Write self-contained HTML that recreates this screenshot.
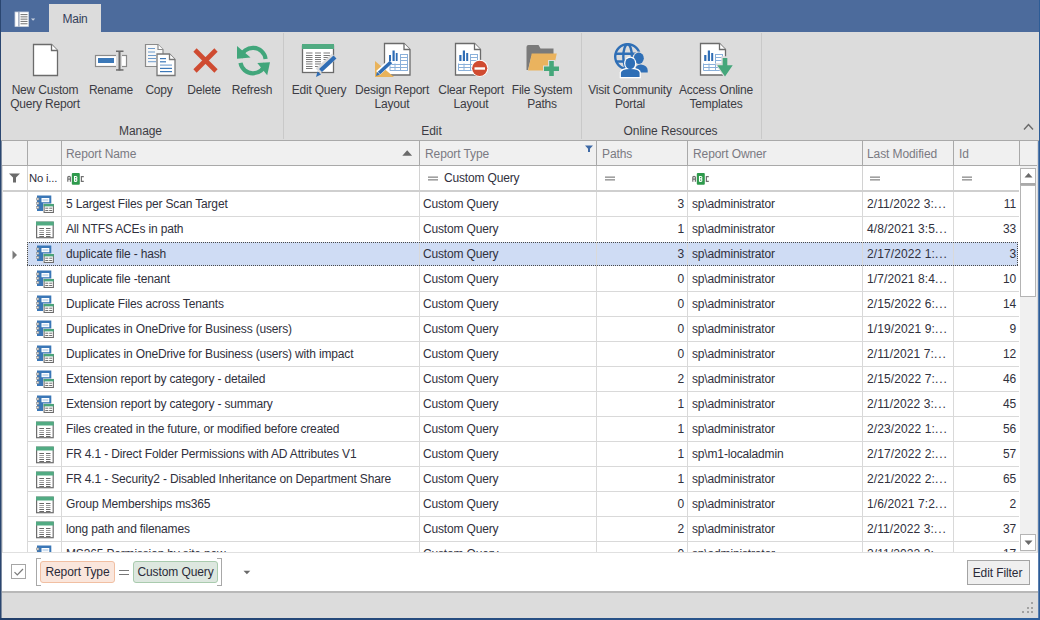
<!DOCTYPE html>
<html><head><meta charset="utf-8"><style>
*{box-sizing:border-box;margin:0;padding:0}
html,body{width:1040px;height:620px;overflow:hidden;background:#dcdcdc;font-family:"Liberation Sans",sans-serif;position:relative}
.abs{position:absolute}
svg{display:block}
.dh{position:absolute;height:1px;background:repeating-linear-gradient(90deg,#4a4a4a 0 1px,transparent 1px 2px)}
.dv{position:absolute;width:1px;background:repeating-linear-gradient(180deg,#4a4a4a 0 1px,transparent 1px 2px)}
#tabbar{position:absolute;left:0;top:0;width:1040px;height:32px;background:#4c6b9c}
#tab{position:absolute;left:49px;top:4px;width:52px;height:28px;background:#dcdcdc;font-size:12px;color:#34405a;text-align:center;line-height:30px;letter-spacing:-0.3px}
.rsep{position:absolute;top:33px;width:1px;height:106px;background:#c9c9c9}
.rbtn{position:absolute;top:83px;font-size:12px;letter-spacing:-0.2px;color:#3c3c44;text-align:center;line-height:14px;white-space:nowrap}
.glab{position:absolute;top:124px;font-size:12px;letter-spacing:-0.1px;color:#3c3c44;text-align:center;white-space:nowrap}
.ht{position:absolute;font-size:12px;letter-spacing:-0.1px;color:#7a7a82;line-height:25px;white-space:nowrap}
.t{position:absolute;font-size:12px;letter-spacing:-0.16px;color:#30303c;line-height:24px;white-space:nowrap}
.t.r{text-align:right}
.ic{position:absolute;width:18px;height:18px}
.pill{position:absolute;top:561px;height:22px;border-radius:3px;font-size:12px;letter-spacing:-0.1px;color:#2a2a38;line-height:20px;text-align:center;white-space:nowrap}
</style></head><body>
<div id="tabbar"></div>
<div id="tab">Main</div>
<svg class="abs" style="left:14px;top:11px" width="24" height="17" viewBox="0 0 24 17"><rect x="1" y="1" width="13.5" height="14.5" fill="#fff" stroke="#c8d0dc" stroke-width="0.8"/><rect x="4.3" y="1" width="1.2" height="14.5" fill="#8a98b0"/><g fill="#7d7d7d"><rect x="6.5" y="3" width="7" height="1.1"/><rect x="6.5" y="5.3" width="7" height="1.1"/><rect x="6.5" y="7.6" width="7" height="1.1"/><rect x="6.5" y="9.9" width="7" height="1.1"/><rect x="6.5" y="12.2" width="7" height="1.1"/></g><path d="M17 7.5h4.2l-2.1 2.2z" fill="#c9d2df"/></svg>
<div class="abs" style="left:1px;top:32px;width:1038px;height:108px;background:#dcdcdc"></div>
<div class="rsep" style="left:283px"></div>
<div class="rsep" style="left:581px"></div>
<div class="rsep" style="left:761px"></div>
<svg class="abs" style="left:0;top:0" width="1040" height="140" viewBox="0 0 1040 140">
<!-- New doc -->
<path d="M33.5 44.5H51.5L57.5 50.5V75.5H33.5Z" fill="#fff" stroke="#6b6b6b" stroke-width="1.3"/>
<path d="M51.5 44.5V50.5H57.5" fill="#fff" stroke="#6b6b6b" stroke-width="1.3"/>
<!-- Rename -->
<rect x="95.5" y="55.5" width="31" height="11" fill="#fff" stroke="#8a8a8a" stroke-width="1.2"/>
<rect x="98" y="58" width="16" height="5" fill="#3b78b8"/>
<rect x="116" y="52" width="6" height="18" fill="#dcdcdc"/>
<rect x="118.5" y="51" width="2" height="19.5" fill="#6b6b6b"/>
<rect x="116" y="50.5" width="7.5" height="1.5" fill="#6b6b6b"/>
<rect x="116" y="69.2" width="7.5" height="1.5" fill="#6b6b6b"/>
<!-- Copy -->
<path d="M145.5 44.5H158L163 49.5V66.5H145.5Z" fill="#f7f7f7" stroke="#8a8a8a" stroke-width="1.2"/>
<path d="M158 44.5V49.5H163" fill="#fff" stroke="#8a8a8a" stroke-width="1.2"/>
<g fill="#6f9ccc"><rect x="148" y="48" width="7" height="1"/><rect x="148" y="51.5" width="7" height="1"/><rect x="148" y="55" width="8" height="1"/><rect x="148" y="58" width="8" height="1"/><rect x="148" y="61.2" width="8" height="1"/></g>
<path d="M157 54H169.5L175 59.5V75.5H157Z" fill="#fff" stroke="#777" stroke-width="1.3"/>
<path d="M169.5 54V59.5H175" fill="#fff" stroke="#777" stroke-width="1.3"/>
<g fill="#3d78b8"><rect x="160" y="58" width="6" height="1.2"/><rect x="160" y="61.2" width="6" height="1.2"/><rect x="160" y="64.5" width="12" height="1.2" fill="#7ea6d2"/><rect x="160" y="67.8" width="12" height="1.2"/><rect x="160" y="71" width="12" height="1.2"/></g>
<!-- Delete -->
<path d="M195 50L216 71M216 50L195 71" stroke="#cf4b31" stroke-width="4.6"/>
<!-- Refresh -->
<g fill="none" stroke="#41a67b" stroke-width="4.2">
<path d="M240.6 57.8A12.7 12.7 0 0 1 265.6 58.9"/>
<path d="M265.4 63.3A12.7 12.7 0 0 1 240.5 62.9"/>
</g>
<path d="M237 46L237 58.8L250.5 57.5Z" fill="#41a67b"/>
<path d="M257.3 63L270 62.3L267.2 75.2Z" fill="#41a67b"/>
<!-- Edit Query -->
<rect x="302.5" y="46" width="31" height="26.5" fill="#fff" stroke="#6b6b6b" stroke-width="1.3"/>
<rect x="302" y="44" width="32" height="5" fill="#51ab82"/>
<g fill="#7a7a7a">
<rect x="306" y="52.5" width="6.5" height="1"/><rect x="315" y="52.5" width="6" height="1"/><rect x="323.5" y="52.5" width="6.5" height="1"/>
<rect x="306" y="55" width="6.5" height="1"/><rect x="315" y="55" width="6" height="1"/><rect x="323.5" y="55" width="6.5" height="1"/>
<rect x="306" y="57" width="6.5" height="1"/><rect x="315" y="57" width="6" height="1"/><rect x="323.5" y="57" width="6.5" height="1"/>
<rect x="306" y="59" width="6.5" height="1"/><rect x="315" y="59" width="6" height="1"/><rect x="323.5" y="59" width="6.5" height="1"/>
<rect x="306" y="61.2" width="6.5" height="1"/><rect x="315" y="61.2" width="6" height="1"/>
<rect x="306" y="63.5" width="6.5" height="1"/><rect x="315" y="63.5" width="6" height="1"/>
<rect x="306" y="66" width="6.5" height="1"/><rect x="315" y="66" width="5" height="1"/>
<rect x="306" y="68" width="6.5" height="1"/>
</g>
<path d="M318 71L334.5 56" stroke="#dcdcdc" stroke-width="7"/>
<path d="M320.5 70.5L335 57" stroke="#2f6db5" stroke-width="4.2"/>
<path d="M316 77L317.5 71.5L321 74.5Z" fill="#2f6db5"/>
<!-- Design Report Layout -->
<path d="M384.5 43.5H404L410 49.5V75H384.5Z" fill="#fff" stroke="#6b6b6b" stroke-width="1.3"/>
<path d="M404 43.5V49.5H410" fill="#fff" stroke="#6b6b6b" stroke-width="1.3"/>
<g fill="#2f6db5"><rect x="389" y="55" width="2" height="6"/><rect x="392.5" y="50.5" width="2.2" height="10.5"/><rect x="395.8" y="53" width="1.8" height="8"/></g>
<g fill="none" stroke="#8ab0da" stroke-width="1"><rect x="400.5" y="54.5" width="7" height="16"/><path d="M400.5 57.5H407.5M400.5 60.5H407.5M390 64.5H407.5M390 67.5H407.5"/><path d="M390 63.5V70.5H400.5M395 63.5V70.5"/></g>
<path d="M375 61L375 77H394Z" fill="#e9b35b"/>
<path d="M378 73L390 62" stroke="#fff" stroke-width="5.5"/>
<path d="M379 73L391 62" stroke="#2f6db5" stroke-width="3.5"/>
<path d="M376 76L377 72L380 74.5Z" fill="#2f6db5"/>
<!-- Clear Report Layout -->
<path d="M455.5 43.5H474.5L480.5 49.5V75H455.5Z" fill="#fff" stroke="#6b6b6b" stroke-width="1.3"/>
<path d="M474.5 43.5V49.5H480.5" fill="#fff" stroke="#6b6b6b" stroke-width="1.3"/>
<g fill="#2f6db5"><rect x="459.3" y="55" width="2.2" height="6"/><rect x="462.8" y="50.5" width="2.2" height="10.5"/><rect x="466.2" y="53" width="2" height="8"/></g>
<g fill="none" stroke="#8ab0da" stroke-width="1"><rect x="470.5" y="54.5" width="7" height="16"/><path d="M470.5 57.5H477.5M470.5 60.5H477.5M458.5 64.5H477.5M458.5 67.5H477.5"/><path d="M458.5 63.5V70.5H470.5M464 63.5V70.5"/></g>
<circle cx="479.7" cy="68.3" r="8.5" fill="#fff"/>
<circle cx="479.7" cy="68.3" r="7.6" fill="#d04b31"/>
<rect x="474.5" y="67.3" width="10.5" height="2.4" fill="#fff"/>
<!-- File system paths -->
<path d="M526.5 47Q526.5 45 528.5 45H538.5L540.5 48.5H553.5V56H531.5L528 70H526.5Z" fill="#7a7a7a"/>
<path d="M531.7 53.5H556.8L553 70.6H528.1Z" fill="#eab35e"/>
<path d="M543 65.5H560V72H543Z" fill="#dcdcdc"/>
<path d="M548 60H555V77H548Z" fill="#dcdcdc"/>
<rect x="544" y="66.5" width="15" height="4.5" fill="#45a77b"/>
<rect x="549.2" y="61" width="4.6" height="15" fill="#45a77b"/>
<!-- Globe -->
<g fill="none" stroke="#2f6fb6" stroke-width="2.4">
<circle cx="627.6" cy="56.6" r="12.4"/>
<ellipse cx="627.6" cy="56.6" rx="4.3" ry="12.4"/>
<path d="M616 53.8H640M616 61.5H640"/>
</g>
<ellipse cx="638.8" cy="58.2" rx="6.2" ry="6.8" fill="#dcdcdc"/>
<path d="M634 64Q641 62 649 66V74H634Z" fill="#dcdcdc"/>
<ellipse cx="638.8" cy="58.2" rx="5" ry="5.7" fill="#2f6fb6"/>
<path d="M635.5 72.5V68Q636.5 64.5 641 64.5Q647.7 65.5 647.7 70.5V72.5Z" fill="#2f6fb6"/>
<ellipse cx="630.2" cy="63.4" rx="6.1" ry="6.9" fill="#fff"/>
<path d="M619.7 78.2V72.5Q620 68 630 67.8Q640.8 68 640.8 72.5V78.2Z" fill="#fff"/>
<ellipse cx="630.2" cy="63.4" rx="4.9" ry="5.7" fill="#2f6fb6"/>
<path d="M620.9 77.1V72.8Q621.3 69.2 630.2 69Q639.3 69.2 639.6 72.8V77.1Z" fill="#2f6fb6"/>
<!-- Access Online Templates -->
<path d="M700.5 43.5H719.5L725.5 49.5V75H700.5Z" fill="#fff" stroke="#6b6b6b" stroke-width="1.3"/>
<path d="M719.5 43.5V49.5H725.5" fill="#fff" stroke="#6b6b6b" stroke-width="1.3"/>
<g fill="#2f6db5"><rect x="704.2" y="55" width="2.2" height="6"/><rect x="707.8" y="50.5" width="2.2" height="10.5"/><rect x="711.2" y="53" width="2" height="8"/></g>
<g fill="none" stroke="#8ab0da" stroke-width="1"><rect x="715.5" y="54.5" width="7" height="16"/><path d="M715.5 57.5H722.5M715.5 60.5H722.5M703.5 64.5H722.5M703.5 67.5H722.5"/><path d="M703.5 63.5V70.5H715.5M709 63.5V70.5"/></g>
<path d="M722 57H728.5V64L733.8 64L725.2 77.5L716.3 64H722Z" fill="#dcdcdc" stroke="#dcdcdc" stroke-width="1.5"/>
<path d="M722.7 58H727.3V65.2L732.7 65.2L725 76.6L717.3 65.2H722.7Z" fill="#45a77b"/>
</svg>

<div class="rbtn" style="left:5px;width:80px">New Custom<br>Query Report</div>
<div class="rbtn" style="left:81px;width:60px">Rename</div>
<div class="rbtn" style="left:135px;width:48px">Copy</div>
<div class="rbtn" style="left:180px;width:48px">Delete</div>
<div class="rbtn" style="left:222px;width:60px">Refresh</div>
<div class="rbtn" style="left:289px;width:60px">Edit Query</div>
<div class="rbtn" style="left:352px;width:80px">Design Report<br>Layout</div>
<div class="rbtn" style="left:431px;width:80px">Clear Report<br>Layout</div>
<div class="rbtn" style="left:507px;width:70px">File System<br>Paths</div>
<div class="rbtn" style="left:585px;width:90px">Visit Community<br>Portal</div>
<div class="rbtn" style="left:676px;width:80px">Access Online<br>Templates</div>
<div class="glab" style="left:100px;width:81px">Manage</div>
<div class="glab" style="left:391px;width:81px">Edit</div>
<div class="glab" style="left:610px;width:121px">Online Resources</div>
<svg class="abs" style="left:1023px;top:122px" width="12" height="9" viewBox="0 0 12 9"><path d="M1 7.5L5.5 2.5L10 7.5" fill="none" stroke="#6a6a6a" stroke-width="1.4"/></svg>
<div class="abs" style="left:1px;top:140px;width:1038px;height:1px;background:#a9a9a9"></div>
<div class="abs" style="left:2px;top:141px;width:1036px;height:412px;background:#fff;"></div>
<div class="abs" style="left:2px;top:141px;width:1036px;height:24px;background:#f0f0f0;"></div>
<div class="abs" style="left:2px;top:165px;width:1036px;height:1px;background:#a9a9a9;"></div>
<div class="abs" style="left:27px;top:141px;width:1px;height:24px;background:#a9a9a9;"></div>
<div class="abs" style="left:61px;top:141px;width:1px;height:24px;background:#a9a9a9;"></div>
<div class="abs" style="left:419px;top:141px;width:1px;height:24px;background:#a9a9a9;"></div>
<div class="abs" style="left:596px;top:141px;width:1px;height:24px;background:#a9a9a9;"></div>
<div class="abs" style="left:687px;top:141px;width:1px;height:24px;background:#a9a9a9;"></div>
<div class="abs" style="left:862px;top:141px;width:1px;height:24px;background:#a9a9a9;"></div>
<div class="abs" style="left:953px;top:141px;width:1px;height:24px;background:#a9a9a9;"></div>
<div class="abs" style="left:1019px;top:141px;width:1px;height:24px;background:#a9a9a9;"></div>
<div class="ht" style="left:66px;top:142px">Report Name</div>
<div class="ht" style="left:425px;top:142px">Report Type</div>
<div class="ht" style="left:602px;top:142px">Paths</div>
<div class="ht" style="left:693px;top:142px">Report Owner</div>
<div class="ht" style="left:867px;top:142px">Last Modified</div>
<div class="ht" style="left:959px;top:142px">Id</div>
<svg class="abs" style="left:402px;top:149px" width="11" height="8" viewBox="0 0 11 8"><path d="M0.3 6.7L5.2 1.2L10.1 6.7Z" fill="#6a6a6a"/></svg>
<svg class="abs" style="left:585px;top:145px" width="9" height="8" viewBox="0 0 9 8"><path d="M0 0.5H8L5 3.8V7H3V3.8Z" fill="#3f6aa6"/></svg>
<div class="abs" style="left:27px;top:166px;width:1px;height:25px;background:#d2d2d2;"></div>
<div class="abs" style="left:61px;top:166px;width:1px;height:25px;background:#d2d2d2;"></div>
<div class="abs" style="left:419px;top:166px;width:1px;height:25px;background:#d2d2d2;"></div>
<div class="abs" style="left:596px;top:166px;width:1px;height:25px;background:#d2d2d2;"></div>
<div class="abs" style="left:687px;top:166px;width:1px;height:25px;background:#d2d2d2;"></div>
<div class="abs" style="left:862px;top:166px;width:1px;height:25px;background:#d2d2d2;"></div>
<div class="abs" style="left:953px;top:166px;width:1px;height:25px;background:#d2d2d2;"></div>
<div class="abs" style="left:1019px;top:166px;width:1px;height:25px;background:#d2d2d2;"></div>
<div class="abs" style="left:2px;top:190px;width:1017px;height:2px;background:#cfcfcf;"></div>
<svg class="abs" style="left:9px;top:173px" width="12" height="10" viewBox="0 0 12 10"><path d="M0 0.5H11L7 4.5V9.5H4V4.5Z" fill="#6b6b6b"/></svg>
<div class="t" style="left:29px;top:166px;font-size:11.3px;letter-spacing:-0.2px">No i...</div>
<div class="abs" style="left:66px;top:172px"><svg width="20" height="14" viewBox="0 0 20 14"><path d="M1.8 9.7V5.6Q1.8 4.3 3.1 4.3Q4.4 4.3 4.4 5.6V9.7M1.8 7.2H4.4" fill="none" stroke="#707070" stroke-width="1.2"/><rect x="5.8" y="0.9" width="8" height="11.9" rx="1" fill="#2e9a4c"/><path d="M8.5 9.4V4.5H10Q10.9 4.5 10.9 5.7Q10.9 6.9 10 6.9H8.5M10 6.9Q10.9 6.9 10.9 8.1Q10.9 9.4 10 9.4H8.5" fill="none" stroke="#fff" stroke-width="1.1"/><path d="M17.8 4.6H15.4V9.3H17.8" fill="none" stroke="#707070" stroke-width="1.2"/></svg></div>
<div class="abs" style="left:428px;top:176px"><svg width="11" height="5" viewBox="0 0 11 5"><rect x="0" y="0.5" width="10" height="1.3" fill="#8a8a8a"/><rect x="0" y="3.2" width="10" height="1.3" fill="#8a8a8a"/></svg></div>
<div class="t" style="left:444px;top:166px">Custom Query</div>
<div class="abs" style="left:605px;top:176px"><svg width="11" height="5" viewBox="0 0 11 5"><rect x="0" y="0.5" width="10" height="1.3" fill="#8a8a8a"/><rect x="0" y="3.2" width="10" height="1.3" fill="#8a8a8a"/></svg></div>
<div class="abs" style="left:691px;top:172px"><svg width="20" height="14" viewBox="0 0 20 14"><path d="M1.8 9.7V5.6Q1.8 4.3 3.1 4.3Q4.4 4.3 4.4 5.6V9.7M1.8 7.2H4.4" fill="none" stroke="#707070" stroke-width="1.2"/><rect x="5.8" y="0.9" width="8" height="11.9" rx="1" fill="#2e9a4c"/><path d="M8.5 9.4V4.5H10Q10.9 4.5 10.9 5.7Q10.9 6.9 10 6.9H8.5M10 6.9Q10.9 6.9 10.9 8.1Q10.9 9.4 10 9.4H8.5" fill="none" stroke="#fff" stroke-width="1.1"/><path d="M17.8 4.6H15.4V9.3H17.8" fill="none" stroke="#707070" stroke-width="1.2"/></svg></div>
<div class="abs" style="left:870px;top:176px"><svg width="11" height="5" viewBox="0 0 11 5"><rect x="0" y="0.5" width="10" height="1.3" fill="#8a8a8a"/><rect x="0" y="3.2" width="10" height="1.3" fill="#8a8a8a"/></svg></div>
<div class="abs" style="left:962px;top:176px"><svg width="11" height="5" viewBox="0 0 11 5"><rect x="0" y="0.5" width="10" height="1.3" fill="#8a8a8a"/><rect x="0" y="3.2" width="10" height="1.3" fill="#8a8a8a"/></svg></div>
<div class="ic" style="left:36px;top:195px"><svg width="18" height="18" viewBox="0 0 18 18"><rect x="1" y="0.5" width="14.3" height="15.5" fill="#3a77b7"/><rect x="5.5" y="3" width="7.8" height="4.2" fill="#fff"/><rect x="6.5" y="4" width="5.8" height="2.2" fill="#cfdff0"/><g fill="#e8e8e8" stroke="#8a8a8a" stroke-width="0.6"><rect x="0.3" y="3" width="2.6" height="2"/><rect x="0.3" y="7.2" width="2.6" height="2"/><rect x="0.3" y="11.5" width="2.6" height="2"/></g><rect x="7" y="8.5" width="11" height="9.5" fill="#fff"/><rect x="8.1" y="9.5" width="9.3" height="8" fill="#fff" stroke="#6d6d6d" stroke-width="1.1"/><rect x="7.6" y="9" width="10.2" height="2.4" fill="#4aa57a"/><g fill="#707070"><rect x="9.3" y="12.7" width="3" height="1"/><rect x="13.2" y="12.7" width="3" height="1"/><rect x="9.3" y="15" width="3" height="1"/><rect x="13.2" y="15" width="3" height="1"/></g></svg></div>
<div class="t" style="left:66px;top:192px">5 Largest Files per Scan Target</div>
<div class="t" style="left:423px;top:192px">Custom Query</div>
<div class="t r" style="left:597px;width:87px;top:192px">3</div>
<div class="t" style="left:692px;top:192px">sp\administrator</div>
<div class="t" style="left:867px;top:192px;letter-spacing:0.1px">2/11/2022 3:<span style="letter-spacing:0.9px">...</span></div>
<div class="t r" style="left:954px;width:62px;top:192px">11</div>
<div class="abs" style="left:27px;top:216px;width:992px;height:1px;background:#d9d9d9;"></div>
<div class="ic" style="left:36px;top:221px"><svg width="18" height="19" viewBox="0 0 18 19"><rect x="0.6" y="1.2" width="16.6" height="15.5" fill="#fff" stroke="#6d6d6d" stroke-width="1.2"/><rect x="0" y="0.6" width="17.8" height="3.9" fill="#52ab83"/><g fill="#6a6a6a"><rect x="3.3" y="7" width="4.7" height="1"/><rect x="10" y="7" width="4.5" height="1"/><rect x="3.3" y="13" width="4.7" height="1"/><rect x="10" y="13" width="4.5" height="1"/><rect x="3.3" y="15" width="4.7" height="1"/><rect x="10" y="15" width="4.5" height="1"/></g><g fill="#9a9a9a"><rect x="3.3" y="9" width="4.7" height="1"/><rect x="10" y="9" width="4.5" height="1"/><rect x="3.3" y="11" width="4.7" height="1"/><rect x="10" y="11" width="4.5" height="1"/></g></svg></div>
<div class="t" style="left:66px;top:217px">All NTFS ACEs in path</div>
<div class="t" style="left:423px;top:217px">Custom Query</div>
<div class="t r" style="left:597px;width:87px;top:217px">1</div>
<div class="t" style="left:692px;top:217px">sp\administrator</div>
<div class="t" style="left:867px;top:217px;letter-spacing:0.1px">4/8/2021 3:5<span style="letter-spacing:0.9px">...</span></div>
<div class="t r" style="left:954px;width:62px;top:217px">33</div>
<div class="abs" style="left:27px;top:241px;width:992px;height:1px;background:#d9d9d9;"></div>
<div class="abs" style="left:27px;top:242px;width:991px;height:24px;background:#cfdcf4;"></div>
<svg class="abs" style="left:12px;top:250px" width="6" height="10" viewBox="0 0 6 10"><path d="M0.5 0.5L5 5L0.5 9.5Z" fill="#7a7a7a"/></svg>
<div class="ic" style="left:36px;top:245px"><svg width="18" height="18" viewBox="0 0 18 18"><rect x="1" y="0.5" width="14.3" height="15.5" fill="#3a77b7"/><rect x="5.5" y="3" width="7.8" height="4.2" fill="#fff"/><rect x="6.5" y="4" width="5.8" height="2.2" fill="#cfdff0"/><g fill="#e8e8e8" stroke="#8a8a8a" stroke-width="0.6"><rect x="0.3" y="3" width="2.6" height="2"/><rect x="0.3" y="7.2" width="2.6" height="2"/><rect x="0.3" y="11.5" width="2.6" height="2"/></g><rect x="7" y="8.5" width="11" height="9.5" fill="#fff"/><rect x="8.1" y="9.5" width="9.3" height="8" fill="#fff" stroke="#6d6d6d" stroke-width="1.1"/><rect x="7.6" y="9" width="10.2" height="2.4" fill="#4aa57a"/><g fill="#707070"><rect x="9.3" y="12.7" width="3" height="1"/><rect x="13.2" y="12.7" width="3" height="1"/><rect x="9.3" y="15" width="3" height="1"/><rect x="13.2" y="15" width="3" height="1"/></g></svg></div>
<div class="t" style="left:66px;top:242px">duplicate file - hash</div>
<div class="t" style="left:423px;top:242px">Custom Query</div>
<div class="t r" style="left:597px;width:87px;top:242px">3</div>
<div class="t" style="left:692px;top:242px">sp\administrator</div>
<div class="t" style="left:867px;top:242px;letter-spacing:0.1px">2/17/2022 1:<span style="letter-spacing:0.9px">...</span></div>
<div class="t r" style="left:954px;width:62px;top:242px">3</div>
<div class="ic" style="left:36px;top:270px"><svg width="18" height="18" viewBox="0 0 18 18"><rect x="1" y="0.5" width="14.3" height="15.5" fill="#3a77b7"/><rect x="5.5" y="3" width="7.8" height="4.2" fill="#fff"/><rect x="6.5" y="4" width="5.8" height="2.2" fill="#cfdff0"/><g fill="#e8e8e8" stroke="#8a8a8a" stroke-width="0.6"><rect x="0.3" y="3" width="2.6" height="2"/><rect x="0.3" y="7.2" width="2.6" height="2"/><rect x="0.3" y="11.5" width="2.6" height="2"/></g><rect x="7" y="8.5" width="11" height="9.5" fill="#fff"/><rect x="8.1" y="9.5" width="9.3" height="8" fill="#fff" stroke="#6d6d6d" stroke-width="1.1"/><rect x="7.6" y="9" width="10.2" height="2.4" fill="#4aa57a"/><g fill="#707070"><rect x="9.3" y="12.7" width="3" height="1"/><rect x="13.2" y="12.7" width="3" height="1"/><rect x="9.3" y="15" width="3" height="1"/><rect x="13.2" y="15" width="3" height="1"/></g></svg></div>
<div class="t" style="left:66px;top:267px">duplicate file -tenant</div>
<div class="t" style="left:423px;top:267px">Custom Query</div>
<div class="t r" style="left:597px;width:87px;top:267px">0</div>
<div class="t" style="left:692px;top:267px">sp\administrator</div>
<div class="t" style="left:867px;top:267px;letter-spacing:0.1px">1/7/2021 8:4<span style="letter-spacing:0.9px">...</span></div>
<div class="t r" style="left:954px;width:62px;top:267px">10</div>
<div class="abs" style="left:27px;top:291px;width:992px;height:1px;background:#d9d9d9;"></div>
<div class="ic" style="left:36px;top:295px"><svg width="18" height="18" viewBox="0 0 18 18"><rect x="1" y="0.5" width="14.3" height="15.5" fill="#3a77b7"/><rect x="5.5" y="3" width="7.8" height="4.2" fill="#fff"/><rect x="6.5" y="4" width="5.8" height="2.2" fill="#cfdff0"/><g fill="#e8e8e8" stroke="#8a8a8a" stroke-width="0.6"><rect x="0.3" y="3" width="2.6" height="2"/><rect x="0.3" y="7.2" width="2.6" height="2"/><rect x="0.3" y="11.5" width="2.6" height="2"/></g><rect x="7" y="8.5" width="11" height="9.5" fill="#fff"/><rect x="8.1" y="9.5" width="9.3" height="8" fill="#fff" stroke="#6d6d6d" stroke-width="1.1"/><rect x="7.6" y="9" width="10.2" height="2.4" fill="#4aa57a"/><g fill="#707070"><rect x="9.3" y="12.7" width="3" height="1"/><rect x="13.2" y="12.7" width="3" height="1"/><rect x="9.3" y="15" width="3" height="1"/><rect x="13.2" y="15" width="3" height="1"/></g></svg></div>
<div class="t" style="left:66px;top:292px">Duplicate Files across Tenants</div>
<div class="t" style="left:423px;top:292px">Custom Query</div>
<div class="t r" style="left:597px;width:87px;top:292px">0</div>
<div class="t" style="left:692px;top:292px">sp\administrator</div>
<div class="t" style="left:867px;top:292px;letter-spacing:0.1px">2/15/2022 6:<span style="letter-spacing:0.9px">...</span></div>
<div class="t r" style="left:954px;width:62px;top:292px">14</div>
<div class="abs" style="left:27px;top:316px;width:992px;height:1px;background:#d9d9d9;"></div>
<div class="ic" style="left:36px;top:320px"><svg width="18" height="18" viewBox="0 0 18 18"><rect x="1" y="0.5" width="14.3" height="15.5" fill="#3a77b7"/><rect x="5.5" y="3" width="7.8" height="4.2" fill="#fff"/><rect x="6.5" y="4" width="5.8" height="2.2" fill="#cfdff0"/><g fill="#e8e8e8" stroke="#8a8a8a" stroke-width="0.6"><rect x="0.3" y="3" width="2.6" height="2"/><rect x="0.3" y="7.2" width="2.6" height="2"/><rect x="0.3" y="11.5" width="2.6" height="2"/></g><rect x="7" y="8.5" width="11" height="9.5" fill="#fff"/><rect x="8.1" y="9.5" width="9.3" height="8" fill="#fff" stroke="#6d6d6d" stroke-width="1.1"/><rect x="7.6" y="9" width="10.2" height="2.4" fill="#4aa57a"/><g fill="#707070"><rect x="9.3" y="12.7" width="3" height="1"/><rect x="13.2" y="12.7" width="3" height="1"/><rect x="9.3" y="15" width="3" height="1"/><rect x="13.2" y="15" width="3" height="1"/></g></svg></div>
<div class="t" style="left:66px;top:317px">Duplicates in OneDrive for Business (users)</div>
<div class="t" style="left:423px;top:317px">Custom Query</div>
<div class="t r" style="left:597px;width:87px;top:317px">0</div>
<div class="t" style="left:692px;top:317px">sp\administrator</div>
<div class="t" style="left:867px;top:317px;letter-spacing:0.1px">1/19/2021 9:<span style="letter-spacing:0.9px">...</span></div>
<div class="t r" style="left:954px;width:62px;top:317px">9</div>
<div class="abs" style="left:27px;top:341px;width:992px;height:1px;background:#d9d9d9;"></div>
<div class="ic" style="left:36px;top:345px"><svg width="18" height="18" viewBox="0 0 18 18"><rect x="1" y="0.5" width="14.3" height="15.5" fill="#3a77b7"/><rect x="5.5" y="3" width="7.8" height="4.2" fill="#fff"/><rect x="6.5" y="4" width="5.8" height="2.2" fill="#cfdff0"/><g fill="#e8e8e8" stroke="#8a8a8a" stroke-width="0.6"><rect x="0.3" y="3" width="2.6" height="2"/><rect x="0.3" y="7.2" width="2.6" height="2"/><rect x="0.3" y="11.5" width="2.6" height="2"/></g><rect x="7" y="8.5" width="11" height="9.5" fill="#fff"/><rect x="8.1" y="9.5" width="9.3" height="8" fill="#fff" stroke="#6d6d6d" stroke-width="1.1"/><rect x="7.6" y="9" width="10.2" height="2.4" fill="#4aa57a"/><g fill="#707070"><rect x="9.3" y="12.7" width="3" height="1"/><rect x="13.2" y="12.7" width="3" height="1"/><rect x="9.3" y="15" width="3" height="1"/><rect x="13.2" y="15" width="3" height="1"/></g></svg></div>
<div class="t" style="left:66px;top:342px">Duplicates in OneDrive for Business (users) with impact</div>
<div class="t" style="left:423px;top:342px">Custom Query</div>
<div class="t r" style="left:597px;width:87px;top:342px">0</div>
<div class="t" style="left:692px;top:342px">sp\administrator</div>
<div class="t" style="left:867px;top:342px;letter-spacing:0.1px">2/11/2021 7:<span style="letter-spacing:0.9px">...</span></div>
<div class="t r" style="left:954px;width:62px;top:342px">12</div>
<div class="abs" style="left:27px;top:366px;width:992px;height:1px;background:#d9d9d9;"></div>
<div class="ic" style="left:36px;top:370px"><svg width="18" height="18" viewBox="0 0 18 18"><rect x="1" y="0.5" width="14.3" height="15.5" fill="#3a77b7"/><rect x="5.5" y="3" width="7.8" height="4.2" fill="#fff"/><rect x="6.5" y="4" width="5.8" height="2.2" fill="#cfdff0"/><g fill="#e8e8e8" stroke="#8a8a8a" stroke-width="0.6"><rect x="0.3" y="3" width="2.6" height="2"/><rect x="0.3" y="7.2" width="2.6" height="2"/><rect x="0.3" y="11.5" width="2.6" height="2"/></g><rect x="7" y="8.5" width="11" height="9.5" fill="#fff"/><rect x="8.1" y="9.5" width="9.3" height="8" fill="#fff" stroke="#6d6d6d" stroke-width="1.1"/><rect x="7.6" y="9" width="10.2" height="2.4" fill="#4aa57a"/><g fill="#707070"><rect x="9.3" y="12.7" width="3" height="1"/><rect x="13.2" y="12.7" width="3" height="1"/><rect x="9.3" y="15" width="3" height="1"/><rect x="13.2" y="15" width="3" height="1"/></g></svg></div>
<div class="t" style="left:66px;top:367px">Extension report by category - detailed</div>
<div class="t" style="left:423px;top:367px">Custom Query</div>
<div class="t r" style="left:597px;width:87px;top:367px">2</div>
<div class="t" style="left:692px;top:367px">sp\administrator</div>
<div class="t" style="left:867px;top:367px;letter-spacing:0.1px">2/15/2022 7:<span style="letter-spacing:0.9px">...</span></div>
<div class="t r" style="left:954px;width:62px;top:367px">46</div>
<div class="abs" style="left:27px;top:391px;width:992px;height:1px;background:#d9d9d9;"></div>
<div class="ic" style="left:36px;top:395px"><svg width="18" height="18" viewBox="0 0 18 18"><rect x="1" y="0.5" width="14.3" height="15.5" fill="#3a77b7"/><rect x="5.5" y="3" width="7.8" height="4.2" fill="#fff"/><rect x="6.5" y="4" width="5.8" height="2.2" fill="#cfdff0"/><g fill="#e8e8e8" stroke="#8a8a8a" stroke-width="0.6"><rect x="0.3" y="3" width="2.6" height="2"/><rect x="0.3" y="7.2" width="2.6" height="2"/><rect x="0.3" y="11.5" width="2.6" height="2"/></g><rect x="7" y="8.5" width="11" height="9.5" fill="#fff"/><rect x="8.1" y="9.5" width="9.3" height="8" fill="#fff" stroke="#6d6d6d" stroke-width="1.1"/><rect x="7.6" y="9" width="10.2" height="2.4" fill="#4aa57a"/><g fill="#707070"><rect x="9.3" y="12.7" width="3" height="1"/><rect x="13.2" y="12.7" width="3" height="1"/><rect x="9.3" y="15" width="3" height="1"/><rect x="13.2" y="15" width="3" height="1"/></g></svg></div>
<div class="t" style="left:66px;top:392px">Extension report by category - summary</div>
<div class="t" style="left:423px;top:392px">Custom Query</div>
<div class="t r" style="left:597px;width:87px;top:392px">1</div>
<div class="t" style="left:692px;top:392px">sp\administrator</div>
<div class="t" style="left:867px;top:392px;letter-spacing:0.1px">2/11/2022 3:<span style="letter-spacing:0.9px">...</span></div>
<div class="t r" style="left:954px;width:62px;top:392px">45</div>
<div class="abs" style="left:27px;top:416px;width:992px;height:1px;background:#d9d9d9;"></div>
<div class="ic" style="left:36px;top:421px"><svg width="18" height="19" viewBox="0 0 18 19"><rect x="0.6" y="1.2" width="16.6" height="15.5" fill="#fff" stroke="#6d6d6d" stroke-width="1.2"/><rect x="0" y="0.6" width="17.8" height="3.9" fill="#52ab83"/><g fill="#6a6a6a"><rect x="3.3" y="7" width="4.7" height="1"/><rect x="10" y="7" width="4.5" height="1"/><rect x="3.3" y="13" width="4.7" height="1"/><rect x="10" y="13" width="4.5" height="1"/><rect x="3.3" y="15" width="4.7" height="1"/><rect x="10" y="15" width="4.5" height="1"/></g><g fill="#9a9a9a"><rect x="3.3" y="9" width="4.7" height="1"/><rect x="10" y="9" width="4.5" height="1"/><rect x="3.3" y="11" width="4.7" height="1"/><rect x="10" y="11" width="4.5" height="1"/></g></svg></div>
<div class="t" style="left:66px;top:417px">Files created in the future, or modified before created</div>
<div class="t" style="left:423px;top:417px">Custom Query</div>
<div class="t r" style="left:597px;width:87px;top:417px">1</div>
<div class="t" style="left:692px;top:417px">sp\administrator</div>
<div class="t" style="left:867px;top:417px;letter-spacing:0.1px">2/23/2022 1:<span style="letter-spacing:0.9px">...</span></div>
<div class="t r" style="left:954px;width:62px;top:417px">56</div>
<div class="abs" style="left:27px;top:441px;width:992px;height:1px;background:#d9d9d9;"></div>
<div class="ic" style="left:36px;top:446px"><svg width="18" height="19" viewBox="0 0 18 19"><rect x="0.6" y="1.2" width="16.6" height="15.5" fill="#fff" stroke="#6d6d6d" stroke-width="1.2"/><rect x="0" y="0.6" width="17.8" height="3.9" fill="#52ab83"/><g fill="#6a6a6a"><rect x="3.3" y="7" width="4.7" height="1"/><rect x="10" y="7" width="4.5" height="1"/><rect x="3.3" y="13" width="4.7" height="1"/><rect x="10" y="13" width="4.5" height="1"/><rect x="3.3" y="15" width="4.7" height="1"/><rect x="10" y="15" width="4.5" height="1"/></g><g fill="#9a9a9a"><rect x="3.3" y="9" width="4.7" height="1"/><rect x="10" y="9" width="4.5" height="1"/><rect x="3.3" y="11" width="4.7" height="1"/><rect x="10" y="11" width="4.5" height="1"/></g></svg></div>
<div class="t" style="left:66px;top:442px">FR 4.1 - Direct Folder Permissions with AD Attributes V1</div>
<div class="t" style="left:423px;top:442px">Custom Query</div>
<div class="t r" style="left:597px;width:87px;top:442px">1</div>
<div class="t" style="left:692px;top:442px">sp\m1-localadmin</div>
<div class="t" style="left:867px;top:442px;letter-spacing:0.1px">2/17/2022 2:<span style="letter-spacing:0.9px">...</span></div>
<div class="t r" style="left:954px;width:62px;top:442px">57</div>
<div class="abs" style="left:27px;top:466px;width:992px;height:1px;background:#d9d9d9;"></div>
<div class="ic" style="left:36px;top:471px"><svg width="18" height="19" viewBox="0 0 18 19"><rect x="0.6" y="1.2" width="16.6" height="15.5" fill="#fff" stroke="#6d6d6d" stroke-width="1.2"/><rect x="0" y="0.6" width="17.8" height="3.9" fill="#52ab83"/><g fill="#6a6a6a"><rect x="3.3" y="7" width="4.7" height="1"/><rect x="10" y="7" width="4.5" height="1"/><rect x="3.3" y="13" width="4.7" height="1"/><rect x="10" y="13" width="4.5" height="1"/><rect x="3.3" y="15" width="4.7" height="1"/><rect x="10" y="15" width="4.5" height="1"/></g><g fill="#9a9a9a"><rect x="3.3" y="9" width="4.7" height="1"/><rect x="10" y="9" width="4.5" height="1"/><rect x="3.3" y="11" width="4.7" height="1"/><rect x="10" y="11" width="4.5" height="1"/></g></svg></div>
<div class="t" style="left:66px;top:467px">FR 4.1 - Security2 - Disabled Inheritance on Department Share</div>
<div class="t" style="left:423px;top:467px">Custom Query</div>
<div class="t r" style="left:597px;width:87px;top:467px">1</div>
<div class="t" style="left:692px;top:467px">sp\administrator</div>
<div class="t" style="left:867px;top:467px;letter-spacing:0.1px">2/21/2022 2:<span style="letter-spacing:0.9px">...</span></div>
<div class="t r" style="left:954px;width:62px;top:467px">65</div>
<div class="abs" style="left:27px;top:491px;width:992px;height:1px;background:#d9d9d9;"></div>
<div class="ic" style="left:36px;top:496px"><svg width="18" height="19" viewBox="0 0 18 19"><rect x="0.6" y="1.2" width="16.6" height="15.5" fill="#fff" stroke="#6d6d6d" stroke-width="1.2"/><rect x="0" y="0.6" width="17.8" height="3.9" fill="#52ab83"/><g fill="#6a6a6a"><rect x="3.3" y="7" width="4.7" height="1"/><rect x="10" y="7" width="4.5" height="1"/><rect x="3.3" y="13" width="4.7" height="1"/><rect x="10" y="13" width="4.5" height="1"/><rect x="3.3" y="15" width="4.7" height="1"/><rect x="10" y="15" width="4.5" height="1"/></g><g fill="#9a9a9a"><rect x="3.3" y="9" width="4.7" height="1"/><rect x="10" y="9" width="4.5" height="1"/><rect x="3.3" y="11" width="4.7" height="1"/><rect x="10" y="11" width="4.5" height="1"/></g></svg></div>
<div class="t" style="left:66px;top:492px">Group Memberships ms365</div>
<div class="t" style="left:423px;top:492px">Custom Query</div>
<div class="t r" style="left:597px;width:87px;top:492px">0</div>
<div class="t" style="left:692px;top:492px">sp\administrator</div>
<div class="t" style="left:867px;top:492px;letter-spacing:0.1px">1/6/2021 7:2<span style="letter-spacing:0.9px">...</span></div>
<div class="t r" style="left:954px;width:62px;top:492px">2</div>
<div class="abs" style="left:27px;top:516px;width:992px;height:1px;background:#d9d9d9;"></div>
<div class="ic" style="left:36px;top:521px"><svg width="18" height="19" viewBox="0 0 18 19"><rect x="0.6" y="1.2" width="16.6" height="15.5" fill="#fff" stroke="#6d6d6d" stroke-width="1.2"/><rect x="0" y="0.6" width="17.8" height="3.9" fill="#52ab83"/><g fill="#6a6a6a"><rect x="3.3" y="7" width="4.7" height="1"/><rect x="10" y="7" width="4.5" height="1"/><rect x="3.3" y="13" width="4.7" height="1"/><rect x="10" y="13" width="4.5" height="1"/><rect x="3.3" y="15" width="4.7" height="1"/><rect x="10" y="15" width="4.5" height="1"/></g><g fill="#9a9a9a"><rect x="3.3" y="9" width="4.7" height="1"/><rect x="10" y="9" width="4.5" height="1"/><rect x="3.3" y="11" width="4.7" height="1"/><rect x="10" y="11" width="4.5" height="1"/></g></svg></div>
<div class="t" style="left:66px;top:517px">long path and filenames</div>
<div class="t" style="left:423px;top:517px">Custom Query</div>
<div class="t r" style="left:597px;width:87px;top:517px">2</div>
<div class="t" style="left:692px;top:517px">sp\administrator</div>
<div class="t" style="left:867px;top:517px;letter-spacing:0.1px">2/11/2022 3:<span style="letter-spacing:0.9px">...</span></div>
<div class="t r" style="left:954px;width:62px;top:517px">37</div>
<div class="abs" style="left:27px;top:541px;width:992px;height:1px;background:#d9d9d9;"></div>
<div class="ic" style="left:36px;top:545px"><svg width="18" height="18" viewBox="0 0 18 18"><rect x="1" y="0.5" width="14.3" height="15.5" fill="#3a77b7"/><rect x="5.5" y="3" width="7.8" height="4.2" fill="#fff"/><rect x="6.5" y="4" width="5.8" height="2.2" fill="#cfdff0"/><g fill="#e8e8e8" stroke="#8a8a8a" stroke-width="0.6"><rect x="0.3" y="3" width="2.6" height="2"/><rect x="0.3" y="7.2" width="2.6" height="2"/><rect x="0.3" y="11.5" width="2.6" height="2"/></g><rect x="7" y="8.5" width="11" height="9.5" fill="#fff"/><rect x="8.1" y="9.5" width="9.3" height="8" fill="#fff" stroke="#6d6d6d" stroke-width="1.1"/><rect x="7.6" y="9" width="10.2" height="2.4" fill="#4aa57a"/><g fill="#707070"><rect x="9.3" y="12.7" width="3" height="1"/><rect x="13.2" y="12.7" width="3" height="1"/><rect x="9.3" y="15" width="3" height="1"/><rect x="13.2" y="15" width="3" height="1"/></g></svg></div>
<div class="t" style="left:66px;top:542px">MS365 Permission by site new</div>
<div class="t" style="left:423px;top:542px">Custom Query</div>
<div class="t r" style="left:597px;width:87px;top:542px">0</div>
<div class="t" style="left:692px;top:542px">sp\administrator</div>
<div class="t" style="left:867px;top:542px;letter-spacing:0.1px">2/11/2022 3:<span style="letter-spacing:0.9px">...</span></div>
<div class="t r" style="left:954px;width:62px;top:542px">17</div>
<div class="abs" style="left:27px;top:566px;width:992px;height:1px;background:#d9d9d9;"></div>
<div class="abs" style="left:27px;top:192px;width:1px;height:361px;background:#d9d9d9;"></div>
<div class="abs" style="left:61px;top:192px;width:1px;height:361px;background:#d9d9d9;"></div>
<div class="abs" style="left:419px;top:192px;width:1px;height:361px;background:#d9d9d9;"></div>
<div class="abs" style="left:596px;top:192px;width:1px;height:361px;background:#d9d9d9;"></div>
<div class="abs" style="left:687px;top:192px;width:1px;height:361px;background:#d9d9d9;"></div>
<div class="abs" style="left:862px;top:192px;width:1px;height:361px;background:#d9d9d9;"></div>
<div class="abs" style="left:953px;top:192px;width:1px;height:361px;background:#d9d9d9;"></div>
<div class="abs" style="left:27px;top:241px;width:992px;height:1px;background:#fff;"></div>
<div class="dh" style="left:27px;top:242px;width:991px"></div>
<div class="dh" style="left:27px;top:265px;width:991px"></div>
<div class="dv" style="left:27px;top:242px;height:24px"></div>
<div class="dv" style="left:1017px;top:242px;height:24px"></div>
<div class="abs" style="left:1019px;top:166px;width:1px;height:387px;background:#ffffff;"></div>
<div class="abs" style="left:1020px;top:166px;width:17px;height:387px;background:#f0f0f0;"></div>
<div class="abs" style="left:1037px;top:141px;width:1px;height:452px;background:#d9d9d9;"></div>
<div class="abs" style="left:1020px;top:168px;width:16px;height:17px;background:#fff;border:1px solid #b4b4b4;border-bottom:2px solid #a9a9a9"></div>
<svg class="abs" style="left:1024px;top:172px" width="9" height="6" viewBox="0 0 9 6"><path d="M0.5 5.5L4.5 1L8.5 5.5Z" fill="#6a6a6a"/></svg>
<div class="abs" style="left:1020px;top:185px;width:16px;height:112px;background:#fff;border:1px solid #b4b4b4"></div>
<div class="abs" style="left:1020px;top:534px;width:16px;height:17px;background:#fff;border:1px solid #b4b4b4"></div>
<svg class="abs" style="left:1024px;top:540px" width="9" height="6" viewBox="0 0 9 6"><path d="M0.5 0.5L4.5 5L8.5 0.5Z" fill="#6a6a6a"/></svg>
<div class="abs" style="left:2px;top:552px;width:1036px;height:1px;background:#e0e0e0;"></div>
<!-- filter panel -->
<div class="abs" style="left:2px;top:553px;width:1036px;height:38px;background:#fff"></div>
<div class="abs" style="left:1px;top:591px;width:1038px;height:2px;background:#b8b8b8"></div>
<div class="abs" style="left:11px;top:564px;width:15px;height:15px;background:#fff;border:1px solid #a6a6a6"></div>
<svg class="abs" style="left:13px;top:567px" width="12" height="10" viewBox="0 0 12 10"><path d="M1.5 5.2L4.3 8L10 2" fill="none" stroke="#7a7a7a" stroke-width="1.2"/></svg>
<div class="abs" style="left:36px;top:558px;width:5px;height:28px;border:1px solid #a8a8a8;border-right:none"></div>
<div class="pill" style="left:40px;width:75px;background:#fae6dc;border:1px solid #f1bfa2">Report Type</div>
<div class="abs" style="left:119px;top:570px;width:10px;height:1.3px;background:#777"></div>
<div class="abs" style="left:119px;top:573.5px;width:10px;height:1.3px;background:#777"></div>
<div class="pill" style="left:133px;width:85px;background:#dde7df;border:1px solid #a9cbae">Custom Query</div>
<div class="abs" style="left:217px;top:558px;width:5px;height:28px;border:1px solid #a8a8a8;border-left:none"></div>
<svg class="abs" style="left:243px;top:570px" width="8" height="5" viewBox="0 0 8 5"><path d="M0.5 0.8H7.3L3.9 4.2Z" fill="#6a6a6a"/></svg>
<div class="abs" style="left:967px;top:560px;width:63px;height:25px;background:#efefef;border:1px solid #a3a3a3;font-size:12px;letter-spacing:-0.1px;text-indent:-2px;color:#2a2a38;text-align:center;line-height:25px">Edit Filter</div>
<!-- status bar -->
<div class="abs" style="left:1px;top:593px;width:1038px;height:25px;background:#dcdcdc"></div>
<g></g>
<div class="abs" style="left:1031px;top:602px;width:2px;height:2px;background:#a2a2a2"></div>
<div class="abs" style="left:1026.5px;top:606.5px;width:2px;height:2px;background:#a2a2a2"></div>
<div class="abs" style="left:1031px;top:606.5px;width:2px;height:2px;background:#a2a2a2"></div>
<div class="abs" style="left:1022px;top:611px;width:2px;height:2px;background:#a2a2a2"></div>
<div class="abs" style="left:1026.5px;top:611px;width:2px;height:2px;background:#a2a2a2"></div>
<div class="abs" style="left:1031px;top:611px;width:2px;height:2px;background:#a2a2a2"></div>
<!-- frame -->
<div class="abs" style="left:0;top:0;width:1px;height:620px;background:#2a4670"></div>
<div class="abs" style="left:1px;top:141px;width:1px;height:477px;background:#7d8ba0"></div>
<div class="abs" style="left:2px;top:166px;width:1px;height:387px;background:#dedede"></div>
<div class="abs" style="left:1038px;top:141px;width:1px;height:477px;background:#5a7fb0"></div>
<div class="abs" style="left:1039px;top:0;width:1px;height:620px;background:#2d5c96"></div>
<div class="abs" style="left:0;top:618px;width:1040px;height:2px;background:linear-gradient(90deg,#223f6a,#2d5f9c)"></div>
</body></html>
